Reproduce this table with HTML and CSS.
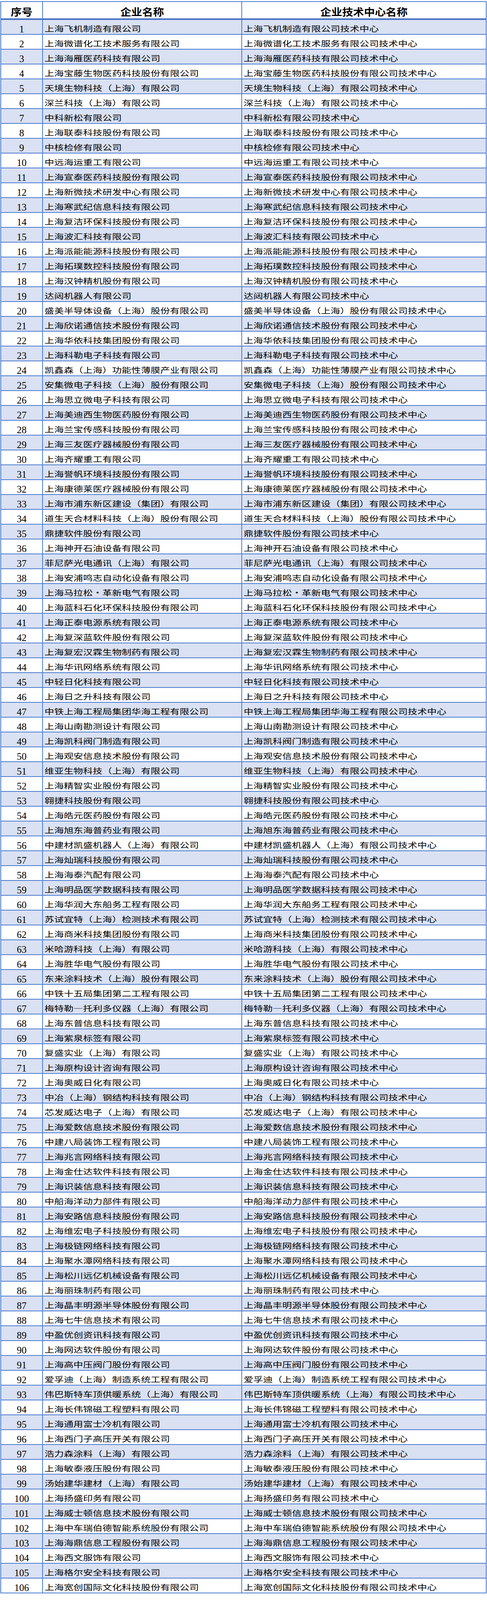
FILE: index.html
```html
<!DOCTYPE html>
<html lang="zh-CN">
<head>
<meta charset="utf-8">
<title>企业技术中心名单</title>
<link rel="stylesheet" href="styles.css">
</head>
<body>
<div class="sheet">
  <div class="head">
    <div class="hc"><span class="h">序号</span></div>
    <div class="hc"><span class="h">企业名称</span></div>
    <div class="hc"><span class="h">企业技术中心名称</span></div>
  </div>
  <div class="rows">
    <div class="row"><div class="c n">1</div><div class="c"><span class="t">上海飞机制造有限公司</span></div><div class="c"><span class="t">上海飞机制造有限公司技术中心</span></div></div>
    <div class="row"><div class="c n">2</div><div class="c"><span class="t">上海微谱化工技术服务有限公司</span></div><div class="c"><span class="t">上海微谱化工技术服务有限公司技术中心</span></div></div>
    <div class="row"><div class="c n">3</div><div class="c"><span class="t">上海海雁医药科技有限公司</span></div><div class="c"><span class="t">上海海雁医药科技有限公司技术中心</span></div></div>
    <div class="row"><div class="c n">4</div><div class="c"><span class="t">上海宝藤生物医药科技股份有限公司</span></div><div class="c"><span class="t">上海宝藤生物医药科技股份有限公司技术中心</span></div></div>
    <div class="row"><div class="c n">5</div><div class="c"><span class="t">天境生物科技（上海）有限公司</span></div><div class="c"><span class="t">天境生物科技（上海）有限公司技术中心</span></div></div>
    <div class="row"><div class="c n">6</div><div class="c"><span class="t">深兰科技（上海）有限公司</span></div><div class="c"><span class="t">深兰科技（上海）有限公司技术中心</span></div></div>
    <div class="row"><div class="c n">7</div><div class="c"><span class="t">中科新松有限公司</span></div><div class="c"><span class="t">中科新松有限公司技术中心</span></div></div>
    <div class="row"><div class="c n">8</div><div class="c"><span class="t">上海联泰科技股份有限公司</span></div><div class="c"><span class="t">上海联泰科技股份有限公司技术中心</span></div></div>
    <div class="row"><div class="c n">9</div><div class="c"><span class="t">中核检修有限公司</span></div><div class="c"><span class="t">中核检修有限公司技术中心</span></div></div>
    <div class="row"><div class="c n">10</div><div class="c"><span class="t">中远海运重工有限公司</span></div><div class="c"><span class="t">中远海运重工有限公司技术中心</span></div></div>
    <div class="row"><div class="c n">11</div><div class="c"><span class="t">上海宣泰医药科技股份有限公司</span></div><div class="c"><span class="t">上海宣泰医药科技股份有限公司技术中心</span></div></div>
    <div class="row"><div class="c n">12</div><div class="c"><span class="t">上海新微技术研发中心有限公司</span></div><div class="c"><span class="t">上海新微技术研发中心有限公司技术中心</span></div></div>
    <div class="row"><div class="c n">13</div><div class="c"><span class="t">上海寒武纪信息科技有限公司</span></div><div class="c"><span class="t">上海寒武纪信息科技有限公司技术中心</span></div></div>
    <div class="row"><div class="c n">14</div><div class="c"><span class="t">上海复洁环保科技股份有限公司</span></div><div class="c"><span class="t">上海复洁环保科技股份有限公司技术中心</span></div></div>
    <div class="row"><div class="c n">15</div><div class="c"><span class="t">上海波汇科技有限公司</span></div><div class="c"><span class="t">上海波汇科技有限公司技术中心</span></div></div>
    <div class="row"><div class="c n">16</div><div class="c"><span class="t">上海派能能源科技股份有限公司</span></div><div class="c"><span class="t">上海派能能源科技股份有限公司技术中心</span></div></div>
    <div class="row"><div class="c n">17</div><div class="c"><span class="t">上海拓璞数控科技股份有限公司</span></div><div class="c"><span class="t">上海拓璞数控科技股份有限公司技术中心</span></div></div>
    <div class="row"><div class="c n">18</div><div class="c"><span class="t">上海汉钟精机股份有限公司</span></div><div class="c"><span class="t">上海汉钟精机股份有限公司技术中心</span></div></div>
    <div class="row"><div class="c n">19</div><div class="c"><span class="t">达闼机器人有限公司</span></div><div class="c"><span class="t">达闼机器人有限公司技术中心</span></div></div>
    <div class="row"><div class="c n">20</div><div class="c"><span class="t">盛美半导体设备（上海）股份有限公司</span></div><div class="c"><span class="t">盛美半导体设备（上海）股份有限公司技术中心</span></div></div>
    <div class="row"><div class="c n">21</div><div class="c"><span class="t">上海欣诺通信技术股份有限公司</span></div><div class="c"><span class="t">上海欣诺通信技术股份有限公司技术中心</span></div></div>
    <div class="row"><div class="c n">22</div><div class="c"><span class="t">上海华依科技集团股份有限公司</span></div><div class="c"><span class="t">上海华依科技集团股份有限公司技术中心</span></div></div>
    <div class="row"><div class="c n">23</div><div class="c"><span class="t">上海科勒电子科技有限公司</span></div><div class="c"><span class="t">上海科勒电子科技有限公司技术中心</span></div></div>
    <div class="row"><div class="c n">24</div><div class="c"><span class="t">凯鑫森（上海）功能性薄膜产业有限公司</span></div><div class="c"><span class="t">凯鑫森（上海）功能性薄膜产业有限公司技术中心</span></div></div>
    <div class="row"><div class="c n">25</div><div class="c"><span class="t">安集微电子科技（上海）股份有限公司</span></div><div class="c"><span class="t">安集微电子科技（上海）股份有限公司技术中心</span></div></div>
    <div class="row"><div class="c n">26</div><div class="c"><span class="t">上海思立微电子科技有限公司</span></div><div class="c"><span class="t">上海思立微电子科技有限公司技术中心</span></div></div>
    <div class="row"><div class="c n">27</div><div class="c"><span class="t">上海美迪西生物医药股份有限公司</span></div><div class="c"><span class="t">上海美迪西生物医药股份有限公司技术中心</span></div></div>
    <div class="row"><div class="c n">28</div><div class="c"><span class="t">上海兰宝传感科技股份有限公司</span></div><div class="c"><span class="t">上海兰宝传感科技股份有限公司技术中心</span></div></div>
    <div class="row"><div class="c n">29</div><div class="c"><span class="t">上海三友医疗器械股份有限公司</span></div><div class="c"><span class="t">上海三友医疗器械股份有限公司技术中心</span></div></div>
    <div class="row"><div class="c n">30</div><div class="c"><span class="t">上海齐耀重工有限公司</span></div><div class="c"><span class="t">上海齐耀重工有限公司技术中心</span></div></div>
    <div class="row"><div class="c n">31</div><div class="c"><span class="t">上海誉帆环境科技股份有限公司</span></div><div class="c"><span class="t">上海誉帆环境科技股份有限公司技术中心</span></div></div>
    <div class="row"><div class="c n">32</div><div class="c"><span class="t">上海康德莱医疗器械股份有限公司</span></div><div class="c"><span class="t">上海康德莱医疗器械股份有限公司技术中心</span></div></div>
    <div class="row"><div class="c n">33</div><div class="c"><span class="t">上海市浦东新区建设（集团）有限公司</span></div><div class="c"><span class="t">上海市浦东新区建设（集团）有限公司技术中心</span></div></div>
    <div class="row"><div class="c n">34</div><div class="c"><span class="t">道生天合材料科技（上海）股份有限公司</span></div><div class="c"><span class="t">道生天合材料科技（上海）股份有限公司技术中心</span></div></div>
    <div class="row"><div class="c n">35</div><div class="c"><span class="t">鼎捷软件股份有限公司</span></div><div class="c"><span class="t">鼎捷软件股份有限公司技术中心</span></div></div>
    <div class="row"><div class="c n">36</div><div class="c"><span class="t">上海神开石油设备有限公司</span></div><div class="c"><span class="t">上海神开石油设备有限公司技术中心</span></div></div>
    <div class="row"><div class="c n">37</div><div class="c"><span class="t">菲尼萨光电通讯（上海）有限公司</span></div><div class="c"><span class="t">菲尼萨光电通讯（上海）有限公司技术中心</span></div></div>
    <div class="row"><div class="c n">38</div><div class="c"><span class="t">上海安浦鸣志自动化设备有限公司</span></div><div class="c"><span class="t">上海安浦鸣志自动化设备有限公司技术中心</span></div></div>
    <div class="row"><div class="c n">39</div><div class="c"><span class="t">上海马拉松·革新电气有限公司</span></div><div class="c"><span class="t">上海马拉松·革新电气有限公司技术中心</span></div></div>
    <div class="row"><div class="c n">40</div><div class="c"><span class="t">上海蓝科石化环保科技股份有限公司</span></div><div class="c"><span class="t">上海蓝科石化环保科技股份有限公司技术中心</span></div></div>
    <div class="row"><div class="c n">41</div><div class="c"><span class="t">上海正泰电源系统有限公司</span></div><div class="c"><span class="t">上海正泰电源系统有限公司技术中心</span></div></div>
    <div class="row"><div class="c n">42</div><div class="c"><span class="t">上海复深蓝软件股份有限公司</span></div><div class="c"><span class="t">上海复深蓝软件股份有限公司技术中心</span></div></div>
    <div class="row"><div class="c n">43</div><div class="c"><span class="t">上海复宏汉霖生物制药有限公司</span></div><div class="c"><span class="t">上海复宏汉霖生物制药有限公司技术中心</span></div></div>
    <div class="row"><div class="c n">44</div><div class="c"><span class="t">上海华讯网络系统有限公司</span></div><div class="c"><span class="t">上海华讯网络系统有限公司技术中心</span></div></div>
    <div class="row"><div class="c n">45</div><div class="c"><span class="t">中轻日化科技有限公司</span></div><div class="c"><span class="t">中轻日化科技有限公司技术中心</span></div></div>
    <div class="row"><div class="c n">46</div><div class="c"><span class="t">上海日之升科技有限公司</span></div><div class="c"><span class="t">上海日之升科技有限公司技术中心</span></div></div>
    <div class="row"><div class="c n">47</div><div class="c"><span class="t">中铁上海工程局集团华海工程有限公司</span></div><div class="c"><span class="t">中铁上海工程局集团华海工程有限公司技术中心</span></div></div>
    <div class="row"><div class="c n">48</div><div class="c"><span class="t">上海山南勘测设计有限公司</span></div><div class="c"><span class="t">上海山南勘测设计有限公司技术中心</span></div></div>
    <div class="row"><div class="c n">49</div><div class="c"><span class="t">上海凯科阀门制造有限公司</span></div><div class="c"><span class="t">上海凯科阀门制造有限公司技术中心</span></div></div>
    <div class="row"><div class="c n">50</div><div class="c"><span class="t">上海观安信息技术股份有限公司</span></div><div class="c"><span class="t">上海观安信息技术股份有限公司技术中心</span></div></div>
    <div class="row"><div class="c n">51</div><div class="c"><span class="t">维亚生物科技（上海）有限公司</span></div><div class="c"><span class="t">维亚生物科技（上海）有限公司技术中心</span></div></div>
    <div class="row"><div class="c n">52</div><div class="c"><span class="t">上海精智实业股份有限公司</span></div><div class="c"><span class="t">上海精智实业股份有限公司技术中心</span></div></div>
    <div class="row"><div class="c n">53</div><div class="c"><span class="t">翱捷科技股份有限公司</span></div><div class="c"><span class="t">翱捷科技股份有限公司技术中心</span></div></div>
    <div class="row"><div class="c n">54</div><div class="c"><span class="t">上海皓元医药股份有限公司</span></div><div class="c"><span class="t">上海皓元医药股份有限公司技术中心</span></div></div>
    <div class="row"><div class="c n">55</div><div class="c"><span class="t">上海旭东海普药业有限公司</span></div><div class="c"><span class="t">上海旭东海普药业有限公司技术中心</span></div></div>
    <div class="row"><div class="c n">56</div><div class="c"><span class="t">中建材凯盛机器人（上海）有限公司</span></div><div class="c"><span class="t">中建材凯盛机器人（上海）有限公司技术中心</span></div></div>
    <div class="row"><div class="c n">57</div><div class="c"><span class="t">上海灿瑞科技股份有限公司</span></div><div class="c"><span class="t">上海灿瑞科技股份有限公司技术中心</span></div></div>
    <div class="row"><div class="c n">58</div><div class="c"><span class="t">上海海泰汽配有限公司</span></div><div class="c"><span class="t">上海海泰汽配有限公司技术中心</span></div></div>
    <div class="row"><div class="c n">59</div><div class="c"><span class="t">上海明品医学数据科技有限公司</span></div><div class="c"><span class="t">上海明品医学数据科技有限公司技术中心</span></div></div>
    <div class="row"><div class="c n">60</div><div class="c"><span class="t">上海华润大东船务工程有限公司</span></div><div class="c"><span class="t">上海华润大东船务工程有限公司技术中心</span></div></div>
    <div class="row"><div class="c n">61</div><div class="c"><span class="t">苏试宜特（上海）检测技术有限公司</span></div><div class="c"><span class="t">苏试宜特（上海）检测技术有限公司技术中心</span></div></div>
    <div class="row"><div class="c n">62</div><div class="c"><span class="t">上海商米科技集团股份有限公司</span></div><div class="c"><span class="t">上海商米科技集团股份有限公司技术中心</span></div></div>
    <div class="row"><div class="c n">63</div><div class="c"><span class="t">米哈游科技（上海）有限公司</span></div><div class="c"><span class="t">米哈游科技（上海）有限公司技术中心</span></div></div>
    <div class="row"><div class="c n">64</div><div class="c"><span class="t">上海胜华电气股份有限公司</span></div><div class="c"><span class="t">上海胜华电气股份有限公司技术中心</span></div></div>
    <div class="row"><div class="c n">65</div><div class="c"><span class="t">东来涂料技术（上海）股份有限公司</span></div><div class="c"><span class="t">东来涂料技术（上海）股份有限公司技术中心</span></div></div>
    <div class="row"><div class="c n">66</div><div class="c"><span class="t">中铁十五局集团第二工程有限公司</span></div><div class="c"><span class="t">中铁十五局集团第二工程有限公司技术中心</span></div></div>
    <div class="row"><div class="c n">67</div><div class="c"><span class="t">梅特勒—托利多仪器（上海）有限公司</span></div><div class="c"><span class="t">梅特勒—托利多仪器（上海）有限公司技术中心</span></div></div>
    <div class="row"><div class="c n">68</div><div class="c"><span class="t">上海东普信息科技有限公司</span></div><div class="c"><span class="t">上海东普信息科技有限公司技术中心</span></div></div>
    <div class="row"><div class="c n">69</div><div class="c"><span class="t">上海紫泉标签有限公司</span></div><div class="c"><span class="t">上海紫泉标签有限公司技术中心</span></div></div>
    <div class="row"><div class="c n">70</div><div class="c"><span class="t">复盛实业（上海）有限公司</span></div><div class="c"><span class="t">复盛实业（上海）有限公司技术中心</span></div></div>
    <div class="row"><div class="c n">71</div><div class="c"><span class="t">上海原构设计咨询有限公司</span></div><div class="c"><span class="t">上海原构设计咨询有限公司技术中心</span></div></div>
    <div class="row"><div class="c n">72</div><div class="c"><span class="t">上海奥威日化有限公司</span></div><div class="c"><span class="t">上海奥威日化有限公司技术中心</span></div></div>
    <div class="row"><div class="c n">73</div><div class="c"><span class="t">中冶（上海）钢结构科技有限公司</span></div><div class="c"><span class="t">中冶（上海）钢结构科技有限公司技术中心</span></div></div>
    <div class="row"><div class="c n">74</div><div class="c"><span class="t">芯发威达电子（上海）有限公司</span></div><div class="c"><span class="t">芯发威达电子（上海）有限公司技术中心</span></div></div>
    <div class="row"><div class="c n">75</div><div class="c"><span class="t">上海爱数信息技术股份有限公司</span></div><div class="c"><span class="t">上海爱数信息技术股份有限公司技术中心</span></div></div>
    <div class="row"><div class="c n">76</div><div class="c"><span class="t">中建八局装饰工程有限公司</span></div><div class="c"><span class="t">中建八局装饰工程有限公司技术中心</span></div></div>
    <div class="row"><div class="c n">77</div><div class="c"><span class="t">上海兆言网络科技有限公司</span></div><div class="c"><span class="t">上海兆言网络科技有限公司技术中心</span></div></div>
    <div class="row"><div class="c n">78</div><div class="c"><span class="t">上海金仕达软件科技有限公司</span></div><div class="c"><span class="t">上海金仕达软件科技有限公司技术中心</span></div></div>
    <div class="row"><div class="c n">79</div><div class="c"><span class="t">上海识装信息科技有限公司</span></div><div class="c"><span class="t">上海识装信息科技有限公司技术中心</span></div></div>
    <div class="row"><div class="c n">80</div><div class="c"><span class="t">中船海洋动力部件有限公司</span></div><div class="c"><span class="t">中船海洋动力部件有限公司技术中心</span></div></div>
    <div class="row"><div class="c n">81</div><div class="c"><span class="t">上海安路信息科技股份有限公司</span></div><div class="c"><span class="t">上海安路信息科技股份有限公司技术中心</span></div></div>
    <div class="row"><div class="c n">82</div><div class="c"><span class="t">上海维宏电子科技股份有限公司</span></div><div class="c"><span class="t">上海维宏电子科技股份有限公司技术中心</span></div></div>
    <div class="row"><div class="c n">83</div><div class="c"><span class="t">上海极链网络科技有限公司</span></div><div class="c"><span class="t">上海极链网络科技有限公司技术中心</span></div></div>
    <div class="row"><div class="c n">84</div><div class="c"><span class="t">上海聚水潭网络科技有限公司</span></div><div class="c"><span class="t">上海聚水潭网络科技有限公司技术中心</span></div></div>
    <div class="row"><div class="c n">85</div><div class="c"><span class="t">上海松川远亿机械设备有限公司</span></div><div class="c"><span class="t">上海松川远亿机械设备有限公司技术中心</span></div></div>
    <div class="row"><div class="c n">86</div><div class="c"><span class="t">上海丽珠制药有限公司</span></div><div class="c"><span class="t">上海丽珠制药有限公司技术中心</span></div></div>
    <div class="row"><div class="c n">87</div><div class="c"><span class="t">上海晶丰明源半导体股份有限公司</span></div><div class="c"><span class="t">上海晶丰明源半导体股份有限公司技术中心</span></div></div>
    <div class="row"><div class="c n">88</div><div class="c"><span class="t">上海七牛信息技术有限公司</span></div><div class="c"><span class="t">上海七牛信息技术有限公司技术中心</span></div></div>
    <div class="row"><div class="c n">89</div><div class="c"><span class="t">中盈优创资讯科技有限公司</span></div><div class="c"><span class="t">中盈优创资讯科技有限公司技术中心</span></div></div>
    <div class="row"><div class="c n">90</div><div class="c"><span class="t">上海网达软件股份有限公司</span></div><div class="c"><span class="t">上海网达软件股份有限公司技术中心</span></div></div>
    <div class="row"><div class="c n">91</div><div class="c"><span class="t">上海高中压阀门股份有限公司</span></div><div class="c"><span class="t">上海高中压阀门股份有限公司技术中心</span></div></div>
    <div class="row"><div class="c n">92</div><div class="c"><span class="t">爱孚迪（上海）制造系统工程有限公司</span></div><div class="c"><span class="t">爱孚迪（上海）制造系统工程有限公司技术中心</span></div></div>
    <div class="row"><div class="c n">93</div><div class="c"><span class="t">伟巴斯特车顶供暖系统（上海）有限公司</span></div><div class="c"><span class="t">伟巴斯特车顶供暖系统（上海）有限公司技术中心</span></div></div>
    <div class="row"><div class="c n">94</div><div class="c"><span class="t">上海长伟锦磁工程塑料有限公司</span></div><div class="c"><span class="t">上海长伟锦磁工程塑料有限公司技术中心</span></div></div>
    <div class="row"><div class="c n">95</div><div class="c"><span class="t">上海通用富士冷机有限公司</span></div><div class="c"><span class="t">上海通用富士冷机有限公司技术中心</span></div></div>
    <div class="row"><div class="c n">96</div><div class="c"><span class="t">上海西门子高压开关有限公司</span></div><div class="c"><span class="t">上海西门子高压开关有限公司技术中心</span></div></div>
    <div class="row"><div class="c n">97</div><div class="c"><span class="t">浩力森涂料（上海）有限公司</span></div><div class="c"><span class="t">浩力森涂料（上海）有限公司技术中心</span></div></div>
    <div class="row"><div class="c n">98</div><div class="c"><span class="t">上海敏泰液压股份有限公司</span></div><div class="c"><span class="t">上海敏泰液压股份有限公司技术中心</span></div></div>
    <div class="row"><div class="c n">99</div><div class="c"><span class="t">汤始建华建材（上海）有限公司</span></div><div class="c"><span class="t">汤始建华建材（上海）有限公司技术中心</span></div></div>
    <div class="row"><div class="c n">100</div><div class="c"><span class="t">上海扬盛印务有限公司</span></div><div class="c"><span class="t">上海扬盛印务有限公司技术中心</span></div></div>
    <div class="row"><div class="c n">101</div><div class="c"><span class="t">上海威士顿信息技术股份有限公司</span></div><div class="c"><span class="t">上海威士顿信息技术股份有限公司技术中心</span></div></div>
    <div class="row"><div class="c n">102</div><div class="c"><span class="t">上海中车瑞伯德智能系统股份有限公司</span></div><div class="c"><span class="t">上海中车瑞伯德智能系统股份有限公司技术中心</span></div></div>
    <div class="row"><div class="c n">103</div><div class="c"><span class="t">上海海鼎信息工程股份有限公司</span></div><div class="c"><span class="t">上海海鼎信息工程股份有限公司技术中心</span></div></div>
    <div class="row"><div class="c n">104</div><div class="c"><span class="t">上海西文服饰有限公司</span></div><div class="c"><span class="t">上海西文服饰有限公司技术中心</span></div></div>
    <div class="row"><div class="c n">105</div><div class="c"><span class="t">上海格尔安全科技有限公司</span></div><div class="c"><span class="t">上海格尔安全科技有限公司技术中心</span></div></div>
    <div class="row"><div class="c n">106</div><div class="c"><span class="t">上海宽创国际文化科技股份有限公司</span></div><div class="c"><span class="t">上海宽创国际文化科技股份有限公司技术中心</span></div></div>
  </div>
</div>
</body>
</html>
```
FILE: styles.css
```css
:root {
  /* one pixel of the 4268px-tall picture, measured along the viewport height */
  --u: calc(100vh / 4268);
}

html, body {
  margin: 0;
  padding: 0;
  background: #ffffff;
}

.sheet {
  margin: calc(3 * var(--u)) 0 0 1px;
  width: 1245px;
  box-sizing: border-box;
  border: 2px solid #4a7bd0;
  border-bottom: none;
  font-family: "Noto Sans CJK SC", "Noto Sans", sans-serif;
  color: #000000;
}

.head,
.row {
  display: grid;
  grid-template-columns: 105px 510px 1fr;
  grid-template-rows: 100%;
  box-sizing: border-box;
}

.head {
  height: calc(50 * var(--u) - 2px);
  border-bottom: 4px solid #4472c4;
  background: #ffffff;
}

.rows {
  display: grid;
  grid-template-columns: 100%;
  grid-auto-rows: calc(39.6 * var(--u));
}

.row {
  min-height: 0;
  border-bottom: 2px solid #4a7bd0;
  background: #ffffff;
}

.rows .row:nth-child(odd) {
  background: #d9e1f2;
}

.hc {
  display: flex;
  align-items: flex-end;
  justify-content: center;
  min-height: 0;
  border-left: 2px solid #4a7bd0;
}

.hc:first-child {
  border-left: none;
}

.h {
  display: inline-block;
  font-weight: 700;
  font-size: 24.5px;
  line-height: normal;
  white-space: nowrap;
  transform: scaleX(1.14);
}

.c {
  display: flex;
  align-items: flex-end;
  min-height: 0;
  padding: 0 0 0 4px;
  border-left: 2px solid #4a7bd0;
}

.c.n {
  border-left: none;
  justify-content: center;
  padding-left: 0;
  font-family: "Liberation Serif", "Times New Roman", serif;
  font-size: 25px;
  line-height: 1;
}

.t {
  display: inline-block;
  font-size: 19.5px;
  line-height: normal;
  white-space: nowrap;
  transform: scaleX(1.267);
  transform-origin: 0 100%;
}
```
